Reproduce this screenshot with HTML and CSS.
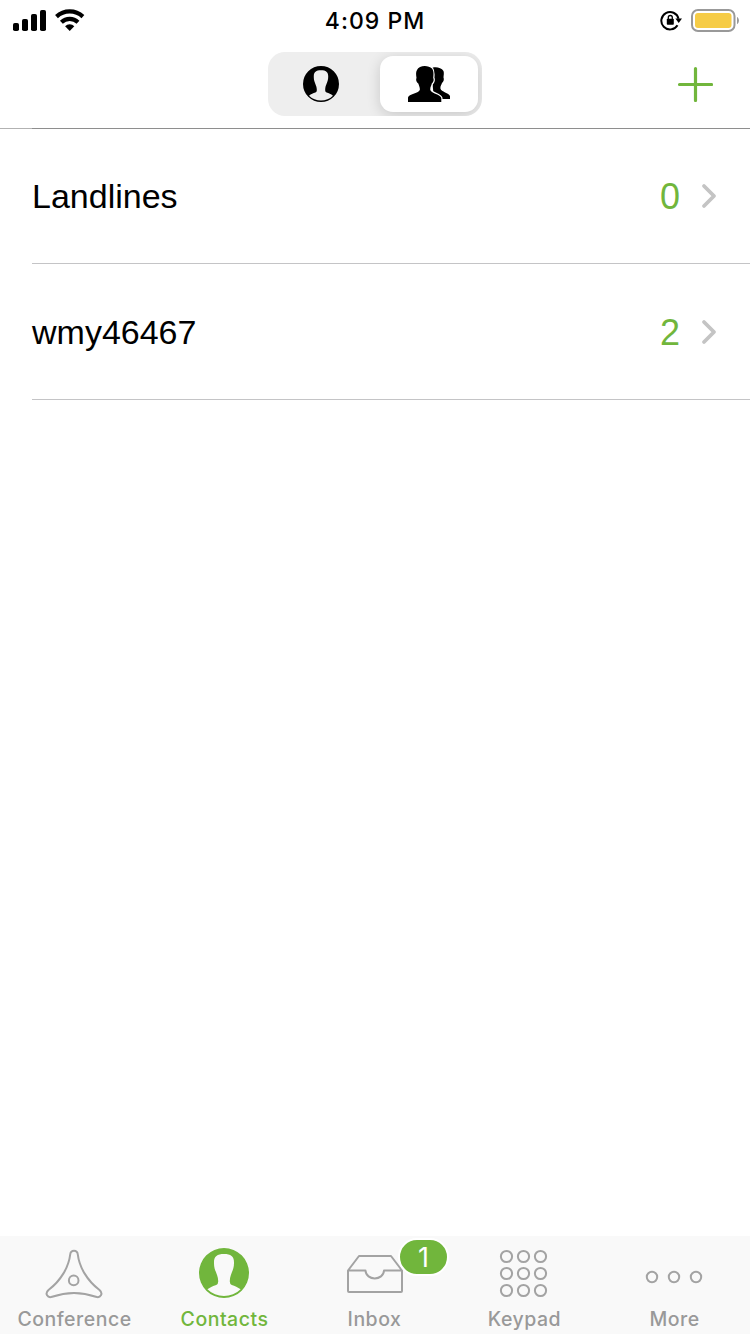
FILE: index.html
```html
<!DOCTYPE html>
<html lang="en">
<head>
    <meta charset="UTF-8">
    <meta name="viewport" content="width=device-width, initial-scale=1.0">
    <title>Contacts</title>
    <link rel="stylesheet" href="styles.css">
</head>
<body>
    <div class="screen">
        <!-- Status Bar -->
        <div class="status-bar">
            <div class="status-left">
                <svg width="33" height="21" viewBox="0 0 33 21">
                    <rect x="0" y="13" width="6" height="8" rx="1.8"/>
                    <rect x="9" y="9" width="6" height="12" rx="1.8"/>
                    <rect x="18" y="4" width="6" height="17" rx="1.8"/>
                    <rect x="27" y="0" width="6" height="21" rx="1.8"/>
                </svg>
                <svg width="30" height="22" viewBox="0 0 30 22">
                    <path d="M1.5 7.6a19.5 19.5 0 0 1 26.400 0M6.400 13.2a12.2 12.2 0 0 1 16.600 0" fill="none" stroke="#000" stroke-width="4.2"/>
                    <path d="M14.700 22l-4.600-4.800a6.600 6.600 0 0 1 9.200 0z"/>
                </svg>
            </div>
            <div class="time">4:09 PM</div>
            <div class="status-right">
                <svg width="22" height="22" viewBox="0 0 22 22">
                    <path d="M17.500 16.200a8.700 8.700 0 1 1 1-6.500" fill="none" stroke="#000" stroke-width="2"/>
                    <path d="M15.400 9.400h6.600l-3.300 4.600z"/>
                    <rect x="6.800" y="9.800" width="7" height="6" rx="0.8"/>
                    <path d="M8.300 10.200V8.500a2 2 0 0 1 4 0V10.200" fill="none" stroke="#000" stroke-width="1.3"/>
                </svg>
                <svg width="48" height="23" viewBox="0 0 48 23">
                    <rect x="1" y="1" width="42.5" height="21" rx="6" fill="none" stroke="#999" stroke-width="2"/>
                    <rect x="4" y="4" width="36.5" height="15" rx="3" fill="#f6cc46"/>
                    <path d="M46 8c2.600 1.200 2.600 6 0 7.200z" fill="#999"/>
                </svg>
            </div>
        </div>

        <!-- Navigation Bar -->
        <div class="nav-bar">
            <div class="segmented">
                <div class="segment">
                    <svg width="36" height="36" viewBox="0 0 50 50">
                        <path fill-rule="evenodd" d="M25 0a25 25 0 1 1 0 50a25 25 0 1 1 0-50zM25 6c-7 0-10.200 2.500-10 9c-.2 8 4.200 11 4.200 18q.2 3.200-2 3.900c-3 1-6 2.200-8.800 4.300a23.500 23.500 0 0 0 33.200 0c-2.800-2.100-5.800-3.300-8.800-4.300q-2.200-.7-2-3.900c0-7 4.200-10 4.200-18c.2-6.500-3-9-10-9z"/>
                    </svg>
                </div>
                <div class="segment active">
                    <svg width="42" height="36" viewBox="0 0 42 36">
                        <path d="M23 2.500C26 .5 33 1 35.500 5c.8 2.500 0 4.500 0 6.500c1 2-.2 4.500-1.500 5.500c-.5 2-1.800 2.500-1.600 5.500c.8 3.500 8.600 4.500 9.600 7.500V33H26z"/>
                        <path d="M0 36v-4.500C1 28 10 27.500 11.800 24c.3-2.500-.7-4-1.500-6.500C8.500 16.300 7.600 13.500 8.500 12C8 9 7.700 6 9 4C11-1 20.500-1 24 2.500c2 2.500 1.500 6.500 1.200 9.500c1 1.500.3 4.300-1.400 5.500c-.4 2.500-1.800 3.500-1.500 6.500C23.500 27.500 32.500 28.500 33.300 32v4z" stroke="#fff" stroke-width="2.4" paint-order="stroke"/>
                    </svg>
                </div>
            </div>
            <svg class="add" width="36" height="36" viewBox="0 0 36 36">
                <path d="M18.500 2.500v32M2.500 18.500h32"/>
            </svg>
        </div>

        <!-- Group List -->
        <div class="list">
            <div class="row">
                <span class="name">Landlines</span>
                <span class="count">0</span>
                <svg class="chevron" width="16" height="26" viewBox="0 0 16 26">
                    <path d="M3 3L13 13L3 23"/>
                </svg>
            </div>
            <div class="row">
                <span class="name">wmy46467</span>
                <span class="count">2</span>
                <svg class="chevron" width="16" height="26" viewBox="0 0 16 26">
                    <path d="M3 3L13 13L3 23"/>
                </svg>
            </div>
        </div>

        <!-- Tab Bar -->
        <div class="tab-bar">
            <div class="tab">
                <svg class="icon" width="58" height="54" viewBox="0 0 58 54">
                    <path d="M25.200 8.500C25.800 3.600 32.200 3.600 32.800 8.500C34.300 21 42 34.500 54.500 44C58.500 47.500 55.500 52.500 50.800 50.800C36 45.700 22 45.700 7.200 50.800C2.500 52.500 -.5 47.500 3.500 44C16 34.500 23.700 21 25.200 8.500z"/>
                    <circle cx="28.700" cy="34.400" r="4.800"/>
                </svg>
                <span>Conference</span>
            </div>
            <div class="tab active">
                <svg width="50" height="54" viewBox="0 -2 50 54">
                    <path fill="#71b63c" fill-rule="evenodd" d="M25 0a25 25 0 1 1 0 50a25 25 0 1 1 0-50zM25 6c-7 0-10.200 2.500-10 9c-.2 8 4.200 11 4.200 18q.2 3.200-2 3.900c-3 1-6 2.200-8.800 4.300a23.500 23.500 0 0 0 33.200 0c-2.800-2.100-5.800-3.300-8.800-4.300q-2.200-.7-2-3.900c0-7 4.200-10 4.200-18c.2-6.500-3-9-10-9z"/>
                </svg>
                <span>Contacts</span>
            </div>
            <div class="tab">
                <svg class="icon" width="58" height="54" viewBox="0 0 58 54">
                    <path d="M3 24.500L14 10h32l11 14.500V45q0 1-1 1H4q-1 0-1-1zM3 24.500H20.500C21 35 38.500 35 39 24.500H57"/>
                </svg>
                <span>Inbox</span>
                <div class="badge">1</div>
            </div>
            <div class="tab">
                <svg class="icon" width="50" height="54" viewBox="0 0 50 54">
                    <circle cx="7.5" cy="10.5" r="5.6"/><circle cx="24.5" cy="10.5" r="5.6"/><circle cx="41.5" cy="10.5" r="5.6"/>
                    <circle cx="7.5" cy="27.5" r="5.6"/><circle cx="24.5" cy="27.5" r="5.6"/><circle cx="41.5" cy="27.5" r="5.6"/>
                    <circle cx="7.5" cy="44.5" r="5.6"/><circle cx="24.5" cy="44.5" r="5.6"/><circle cx="41.5" cy="44.5" r="5.6"/>
                </svg>
                <span>Keypad</span>
            </div>
            <div class="tab">
                <svg class="icon" width="58" height="54" viewBox="0 0 58 54">
                    <circle cx="7" cy="31" r="5.2"/><circle cx="29" cy="31" r="5.2"/><circle cx="51" cy="31" r="5.2"/>
                </svg>
                <span>More</span>
            </div>
        </div>
    </div>
</body>
</html>
```

FILE: styles.css
```css
/* General Styles */
* {
    box-sizing: border-box;
}

body {
    margin: 0;
    background: #fff;
    color: #000;
    font-family: "Liberation Sans", Arial, sans-serif;
}

svg {
    display: block;
    flex: none;
}

.screen {
    display: flex;
    flex-direction: column;
    width: 750px;
    height: 1334px;
    overflow: hidden;
}

/* Status Bar */
.status-bar {
    display: grid;
    grid-template-columns: 1fr auto 1fr;
    align-items: center;
    height: 40px;
    padding: 0 11px 0 13px;
}

.status-left,
.status-right {
    display: flex;
    align-items: center;
    gap: 9px;
}

.status-right {
    justify-content: flex-end;
}

.time {
    margin-right: 2px;
    padding-top: 1px;
    font-family: Inter, sans-serif;
    font-size: 23px;
    font-weight: 500;
    letter-spacing: 1px;
}

/* Navigation Bar */
.nav-bar {
    display: grid;
    grid-template-columns: 1fr 214px 1fr;
    align-items: center;
    height: 89px;
    border-bottom: 1px solid #b2b2b2;
}

.segmented {
    display: flex;
    grid-column: 2;
    height: 64px;
    padding: 4px;
    border-radius: 17px;
    background: #eee;
    overflow: hidden;
}

.segment {
    display: flex;
    flex: 1;
    align-items: center;
    justify-content: center;
    padding-right: 10px;
}

.segment.active {
    flex: 0 0 98px;
    padding: 0;
    border-radius: 13px;
    background: #fff;
    box-shadow: 0 3px 14px rgba(0, 0, 0, 0.16);
}

.add {
    justify-self: end;
    margin-right: 37px;
    fill: none;
    stroke: #71b63c;
    stroke-width: 3.2;
    stroke-linecap: round;
}

/* Group List */
.list {
    flex: 1;
    margin-top: -1px;
    padding-left: 32px;
}

.row {
    display: flex;
    align-items: center;
    height: 136px;
    padding-right: 33px;
    border-bottom: 1px solid #c4c4c6;
}

.row:first-child {
    border-top: 1px solid #8e8e8e;
}

.name {
    flex: 1;
    padding-top: 1px;
    font-size: 34px;
}

.count {
    margin-right: 21px;
    padding-top: 2px;
    color: #71b63c;
    font-size: 36px;
}

.chevron {
    fill: none;
    stroke: #c4c4c4;
    stroke-width: 3.8;
    stroke-linecap: round;
    stroke-linejoin: round;
}

/* Tab Bar */
.tab-bar {
    display: flex;
    height: 98px;
    background: #f9f9f9;
}

.tab {
    display: flex;
    flex: 1;
    flex-direction: column;
    align-items: center;
    gap: 7px;
    position: relative;
    padding: 10px 2px 0 0;
    color: #999;
    font-family: Inter, sans-serif;
    font-size: 19.5px;
    font-weight: 500;
    line-height: 24px;
    letter-spacing: 0.5px;
}

.tab span {
    margin-left: 1px;
}

.tab.active {
    color: #71b63c;
}

.icon {
    fill: none;
    stroke: #a3a3a3;
    stroke-width: 2;
    stroke-linejoin: round;
}

.badge {
    position: absolute;
    top: 2px;
    left: 98px;
    width: 51px;
    height: 38px;
    border: 2px solid #fff;
    border-radius: 19px;
    background: #71b63c;
    color: #fff;
    font-family: Inter, sans-serif;
    font-size: 27px;
    font-weight: 400;
    letter-spacing: 0;
    line-height: 35px;
    text-align: center;
}
```
